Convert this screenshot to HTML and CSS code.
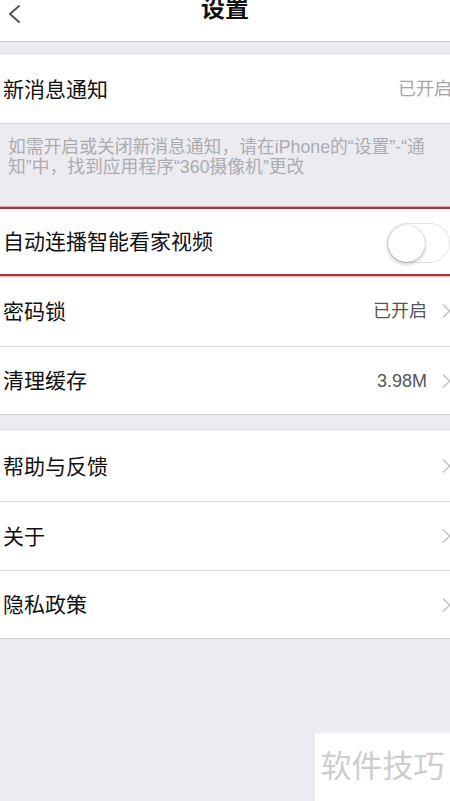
FILE: index.html
```html
<!DOCTYPE html>
<html lang="zh-CN">
<head>
  <meta charset="UTF-8" />
  <meta name="viewport" content="width=device-width, initial-scale=1" />
  <title>设置</title>
  <link rel="stylesheet" href="styles.css">
</head>
<body>
  <div class="nav-bar">
    <div class="nav-left">
      <svg class="back-icon" width="14" height="20" viewBox="0 0 14 20">
        <path d="M12 2 L3 10 L12 18" fill="none" stroke="#555" stroke-width="2" stroke-linecap="round" stroke-linejoin="round"/>
      </svg>
    </div>
    <div class="nav-title">设置</div>
    <div class="nav-right"></div>
  </div>

  <div class="section-gap"></div>

  <div class="cell-group">
    <div class="cell cell-notify">
      <span class="cell-label">新消息通知</span>
      <span class="cell-value value-muted">已开启</span>
    </div>
  </div>

  <div class="note">
    如需开启或关闭新消息通知，请在iPhone的“设置”-“通知”中，找到应用程序“360摄像机”更改
  </div>

  <div class="cell-group">
    <div class="cell cell-toggle">
      <span class="cell-label">自动连播智能看家视频</span>
      <div class="switch">
        <div class="switch-knob"></div>
      </div>
    </div>
    <div class="cell cell-lock">
      <span class="cell-label">密码锁</span>
      <span class="cell-value">已开启</span>
      <svg class="chevron" width="10" height="16" viewBox="0 0 10 16"><path d="M2 1.5 L8.5 8 L2 14.5" /></svg>
    </div>
    <div class="cell cell-cache">
      <span class="cell-label">清理缓存</span>
      <span class="cell-value">3.98M</span>
      <svg class="chevron" width="10" height="16" viewBox="0 0 10 16"><path d="M2 1.5 L8.5 8 L2 14.5" /></svg>
    </div>
  </div>

  <div class="section-gap small"></div>

  <div class="cell-group">
    <div class="cell cell-help">
      <span class="cell-label">帮助与反馈</span>
      <svg class="chevron" width="10" height="16" viewBox="0 0 10 16"><path d="M2 1.5 L8.5 8 L2 14.5" /></svg>
    </div>
    <div class="cell cell-about">
      <span class="cell-label">关于</span>
      <svg class="chevron" width="10" height="16" viewBox="0 0 10 16"><path d="M2 1.5 L8.5 8 L2 14.5" /></svg>
    </div>
    <div class="cell cell-privacy">
      <span class="cell-label">隐私政策</span>
      <svg class="chevron" width="10" height="16" viewBox="0 0 10 16"><path d="M2 1.5 L8.5 8 L2 14.5" /></svg>
    </div>
  </div>

  <div class="watermark">软件技巧</div>
</body>
</html>
```

FILE: styles.css
```css
body {
  margin: 0;
  background-color: #ebebf0;
  font-family: "Liberation Sans", "Noto Sans CJK SC", sans-serif;
  color: #111;
  height: 801px;
  overflow: hidden;
  position: relative;
}
/* Top navigation */
.nav-bar {
  height: 41px;
  background: #fff;
  border-bottom: 1px solid #c9c9cd;
  display: grid;
  grid-template-columns: 1fr auto 1fr;
  align-items: start;
}
.back-icon {
  display: block;
  margin: 4px 0 0 7px;
}
.nav-title {
  font-size: 24px;
  font-weight: bold;
  line-height: 24px;
  margin-top: -3px;
  color: #111;
}
.section-gap {
  height: 13px;
}
.section-gap.small {
  height: 16px;
}
/* Cells */
.cell-group {
  background: #fff;
}
.cell {
  display: flex;
  align-items: center;
  padding-left: 3px;
  box-sizing: border-box;
  border-bottom: 1px solid #dcdce0;
}
.cell-label {
  flex: 1;
  font-size: 21px;
  line-height: 1;
}
.cell-value {
  font-size: 18px;
  color: #555;
  line-height: 1;
}
.value-muted {
  color: #a6a6a6;
  margin-right: -2px;
}
.chevron {
  margin-left: 14px;
  margin-right: -1px;
  flex: none;
}
.chevron path {
  fill: none;
  stroke: #c4c4c9;
  stroke-width: 1.6;
}
.cell-notify {
  height: 69px;
  border-bottom-color: #d3d3d8;
}
.cell-toggle {
  height: 69px;
  border-top: 2px solid #b3303a;
  border-bottom: 2px solid #b3303a;
  box-shadow: 0 -1px 1px rgba(200, 80, 90, 0.4), 0 1px 1px rgba(200, 80, 90, 0.4);
}
.cell-lock {
  height: 71px;
}
.cell-cache {
  height: 68px;
  border-bottom-color: #d3d3d8;
}
.cell-help {
  height: 71px;
}
.cell-about {
  height: 69px;
}
.cell-privacy {
  height: 68px;
  border-bottom-color: #d3d3d8;
}
/* Footnote */
.note {
  height: 83px;
  box-sizing: border-box;
  padding: 13px 10px 0 8px;
  font-size: 17.8px;
  line-height: 20px;
  color: #ababb0;
}
/* Switch */
.switch {
  width: 63px;
  height: 40px;
  box-sizing: border-box;
  border: 1.5px solid #e2e2e4;
  border-radius: 20px;
  background: #fff;
  display: flex;
  align-items: center;
  margin-top: 3px;
}
.switch-knob {
  width: 37px;
  height: 37px;
  border-radius: 50%;
  background: #fff;
  box-shadow: 0 2px 4px rgba(0, 0, 0, 0.25), 0 0 1px rgba(0, 0, 0, 0.3);
}
/* Watermark overlay */
.watermark {
  position: absolute;
  right: 0;
  bottom: 0;
  width: 135px;
  height: 68px;
  background: #fff;
  color: #cdcdcd;
  font-size: 31px;
  line-height: 68px;
  text-align: center;
}
```
